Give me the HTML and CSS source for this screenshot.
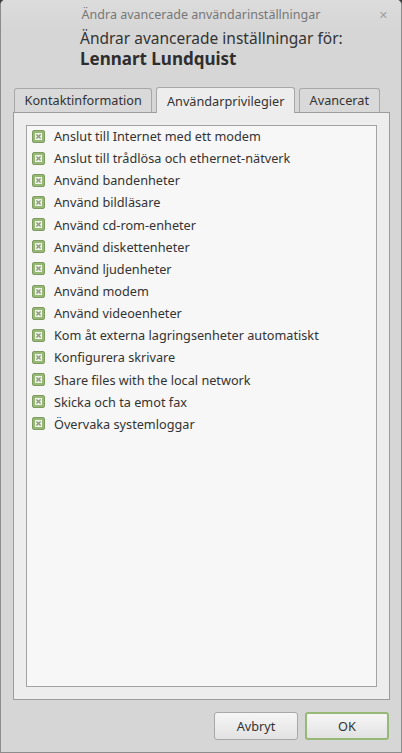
FILE: index.html
```html
<!DOCTYPE html>
<html>
<head>
  <title>Ändra avancerade användarinställningar</title>
  <meta charset="utf-8">
  <link rel="stylesheet" href="styles.css">
</head>
<body>
<div class="window">
  <div class="titlebar">
    <span class="title">Ändra avancerade användarinställningar</span>
    <span class="close">&#x2715;</span>
  </div>

  <div class="header">
    <div class="subtitle">Ändrar avancerade inställningar för:</div>
    <div class="username">Lennart Lundquist</div>
  </div>

  <div class="tabs">
    <div class="tab">Kontaktinformation</div>
    <div class="tab active">Användarprivilegier</div>
    <div class="tab">Avancerat</div>
  </div>

  <div class="pane">
    <ul class="privileges">
      <li><span class="check"><svg viewBox="0 0 5 5"><path d="M1 1L4 4M4 1L1 4"/></svg></span>Anslut till Internet med ett modem</li>
      <li><span class="check"><svg viewBox="0 0 5 5"><path d="M1 1L4 4M4 1L1 4"/></svg></span>Anslut till trådlösa och ethernet-nätverk</li>
      <li><span class="check"><svg viewBox="0 0 5 5"><path d="M1 1L4 4M4 1L1 4"/></svg></span>Använd bandenheter</li>
      <li><span class="check"><svg viewBox="0 0 5 5"><path d="M1 1L4 4M4 1L1 4"/></svg></span>Använd bildläsare</li>
      <li><span class="check"><svg viewBox="0 0 5 5"><path d="M1 1L4 4M4 1L1 4"/></svg></span>Använd cd-rom-enheter</li>
      <li><span class="check"><svg viewBox="0 0 5 5"><path d="M1 1L4 4M4 1L1 4"/></svg></span>Använd diskettenheter</li>
      <li><span class="check"><svg viewBox="0 0 5 5"><path d="M1 1L4 4M4 1L1 4"/></svg></span>Använd ljudenheter</li>
      <li><span class="check"><svg viewBox="0 0 5 5"><path d="M1 1L4 4M4 1L1 4"/></svg></span>Använd modem</li>
      <li><span class="check"><svg viewBox="0 0 5 5"><path d="M1 1L4 4M4 1L1 4"/></svg></span>Använd videoenheter</li>
      <li><span class="check"><svg viewBox="0 0 5 5"><path d="M1 1L4 4M4 1L1 4"/></svg></span>Kom åt externa lagringsenheter automatiskt</li>
      <li><span class="check"><svg viewBox="0 0 5 5"><path d="M1 1L4 4M4 1L1 4"/></svg></span>Konfigurera skrivare</li>
      <li><span class="check"><svg viewBox="0 0 5 5"><path d="M1 1L4 4M4 1L1 4"/></svg></span>Share files with the local network</li>
      <li><span class="check"><svg viewBox="0 0 5 5"><path d="M1 1L4 4M4 1L1 4"/></svg></span>Skicka och ta emot fax</li>
      <li><span class="check"><svg viewBox="0 0 5 5"><path d="M1 1L4 4M4 1L1 4"/></svg></span>Övervaka systemloggar</li>
    </ul>
  </div>

  <div class="buttons">
    <button class="btn">Avbryt</button>
    <button class="btn ok">OK</button>
  </div>
</div>
</body>
</html>
```

FILE: styles.css
```css
html, body {
  margin: 0;
  padding: 0;
  background: #3c3c3c;
}

body {
  font-family: "Noto Sans", "DejaVu Sans", sans-serif;
  color: #3c3c3c;
}

.window {
  width: 400px;
  height: 752px;
  background: #d6d6d6;
  border: 1px solid #8c8c8c;
  border-top: none;
  border-radius: 5px 5px 0 0;
  display: flex;
  flex-direction: column;
  overflow: hidden;
}

.titlebar {
  height: 29px;
  flex: none;
  display: flex;
  align-items: center;
  justify-content: center;
  position: relative;
  background: linear-gradient(#dcdcdc, #d6d6d6);
}

.title {
  font-size: 12.5px;
  color: #777;
}

.close {
  position: absolute;
  right: 13px;
  top: 7px;
  font-size: 11px;
  font-weight: bold;
  color: #a0a0a0;
}

.header {
  padding: 0 0 0 79px;
  height: 57px;
  flex: none;
}

.subtitle {
  font-size: 15.5px;
  line-height: 19px;
  color: #333;
}

.username {
  font-size: 17px;
  font-weight: bold;
  line-height: 22px;
  color: #2e2e2e;
}

.tabs {
  display: flex;
  gap: 4px;
  padding-left: 13px;
  align-items: flex-end;
  height: 26px;
  flex: none;
}

.tab {
  height: 23px;
  line-height: 23px;
  padding: 0 9.6px;
  font-size: 12.7px;
  color: #333;
  background: #d9d9d9;
  border: 1px solid #a8a8a8;
  border-bottom: none;
  border-radius: 3px 3px 0 0;
}

.tab.active {
  height: 25px;
  line-height: 26px;
  background: #ededed;
  margin-bottom: -1px;
  position: relative;
}

.pane {
  box-sizing: border-box;
  margin: 0 11px 0 12px;
  height: 588px;
  flex: none;
  background: #ededed;
  border: 1px solid #9c9c9c;
  padding: 12px;
}

.privileges {
  box-sizing: border-box;
  list-style: none;
  margin: 0;
  padding: 0;
  height: 562px;
  background: #f7f7f7;
  border: 1px solid #a3a3a3;
}

.privileges li {
  display: flex;
  align-items: center;
  height: 22.15px;
  font-size: 12.7px;
  color: #333;
  padding-left: 5px;
}

.privileges li:first-child {
  margin-top: -1px;
}

.check {
  box-sizing: border-box;
  width: 13px;
  height: 13px;
  border: 1px solid #7e9c60;
  border-radius: 2px;
  background: #98b876;
  margin-right: 9px;
  padding: 2px;
  flex: none;
  display: flex;
}

.check svg {
  width: 7px;
  height: 7px;
  background: #eef2e8;
  stroke: #8a9a7a;
  stroke-width: 1;
}

.buttons {
  display: flex;
  justify-content: flex-end;
  gap: 7px;
  padding: 12px 12px 0 0;
}

.btn {
  width: 84px;
  height: 28px;
  font-family: "Noto Sans", "DejaVu Sans", sans-serif;
  font-size: 12.7px;
  color: #333;
  background: linear-gradient(#f6f6f6, #e2e2e2);
  border: 1px solid #a8a8a8;
  border-radius: 3px;
}

.btn.ok {
  border: 2px solid #98b878;
}
```
